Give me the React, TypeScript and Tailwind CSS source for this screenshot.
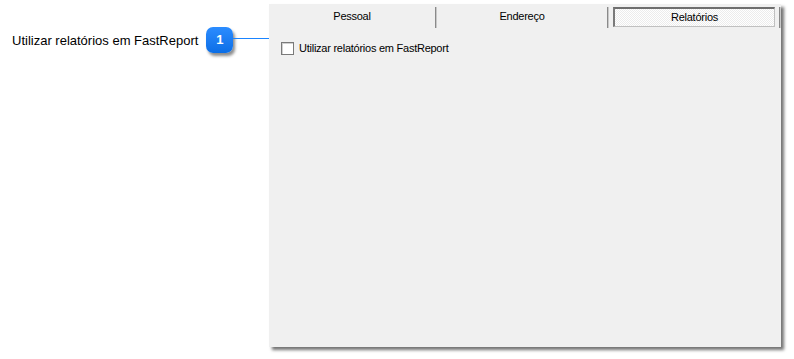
const TABS = ["Pessoal", "Endereço"];

export default function App() {
  return (
    <div
      className="relative w-[794px] h-[359px] bg-white overflow-hidden"
      style={{ fontFamily: '"Liberation Sans", Arial, sans-serif' }}
    >
      <div className="flex items-start pt-[4px]">
        {/* Legenda à esquerda */}
        <div className="w-[269px] shrink-0 flex items-center pl-[12px] pt-[23px]">
          <span className="text-[13px] text-black leading-none whitespace-nowrap">
            Utilizar relatórios em FastReport
          </span>
          <div className="ml-[8px] w-[27px] h-[26px] rounded-[7px] bg-gradient-to-b from-[#2b8cff] to-[#0a6ee6] shadow-[2px_3px_3px_rgba(0,0,0,0.45)] flex items-center justify-center text-white text-[13px] font-bold">
            1
          </div>
          <div className="flex-1 h-px mb-[3px] bg-[#1a84ff]" />
        </div>

        {/* Painel */}
        <div className="w-[512px] h-[343px] bg-[#f0f0f0] shadow-[3px_3px_3px_rgba(0,0,0,0.55)] text-[11px] tracking-[-0.25px] text-black">
          <div className="flex h-[24px] items-center">
            {TABS.map((t) => (
              <div key={t} className="flex items-center h-full">
                <div className={`${t === "Pessoal" ? "w-[166px]" : "w-[170px]"} text-center pt-[1px]`}>{t}</div>
                <div className="w-[2px] h-[21px] mt-[2px] border-l border-[#8a8a8a] border-r border-r-[#c8c8c8]" />
              </div>
            ))}
            <div className="ml-[4px] w-[162px] h-[20px] mt-[2px] border-t-2 border-l-2 border-t-[#6e6e6e] border-l-[#7a7a7a] border-r border-b border-r-[#c0c0c0] border-b-[#c0c0c0] bg-[repeating-conic-gradient(#ffffff_0_25%,#ececec_0_50%)] bg-[length:2px_2px] flex items-center justify-center">
              Relatórios
            </div>
            <div className="ml-[4px] w-[2px] h-[21px] mt-[2px] border-l border-[#8a8a8a] border-r border-r-[#c8c8c8]" />
          </div>

          <label className="flex items-center ml-[12px] mt-[12px]">
            <span className="w-[13px] h-[13px] border border-[#7a7a7a] bg-white shadow-[inset_1px_1px_0_#d0d0d0]" />
            <span className="ml-[5px]">Utilizar relatórios em FastReport</span>
          </label>
        </div>
      </div>
    </div>
  );
}
